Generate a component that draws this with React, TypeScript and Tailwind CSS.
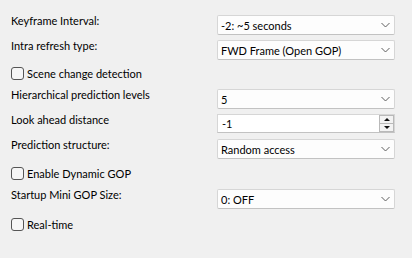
import React from "react";

const Chevron = () => (
  <svg width="9" height="5" viewBox="0 0 9 5" className="absolute right-[4px] top-1/2 -translate-y-1/2">
    <path d="M0.5 0.5 L4.5 4.5 L8.5 0.5" fill="none" stroke="#5f5f5f" strokeWidth="1" />
  </svg>
);

const Combo = ({ value }: { value: string }) => (
  <div className="relative w-[178px] h-[20px] bg-[#fdfdfd] border border-[#d6d6d6] border-b-[#c2c2c2] rounded-[2px] pl-[3px] leading-[19px] text-[#000]">
    {value}
    <Chevron />
  </div>
);

const Spin = ({ value }: { value: string }) => (
  <div className="relative w-[178px] h-[19px] bg-white border border-[#d6d6d6] border-b-[#c2c2c2] pl-[4px] leading-[18px]">
    {value}
    <div className="absolute right-0 top-0 bottom-0 w-[15px] flex flex-col">
      <div className="flex-1 flex items-center justify-center bg-[#f3f3f3] border border-[#b9b9b9]">
        <svg width="6" height="3" viewBox="0 0 6 3"><path d="M0 3 L3 0 L6 3 Z" fill="#111" /></svg>
      </div>
      <div className="flex-1 flex items-center justify-center bg-[#f3f3f3] border border-t-0 border-[#b9b9b9]">
        <svg width="6" height="3" viewBox="0 0 6 3"><path d="M0 0 L3 3 L6 0 Z" fill="#111" /></svg>
      </div>
    </div>
  </div>
);

const Row = ({ label, mt, children }: { label: string; mt: string; children: React.ReactNode }) => (
  <div className={`flex items-start ${mt}`}>
    <div className="w-[206px] -mt-[2px] leading-[16px]">{label}</div>
    {children}
  </div>
);

const Check = ({ label, mt }: { label: string; mt: string }) => (
  <div className={`flex items-center h-[13px] ${mt}`}>
    <div className="w-[13px] h-[13px] border border-[#555] rounded-[3px] bg-[#f6f6f6]" />
    <span className="ml-[3px] leading-[16px]">{label}</span>
  </div>
);

export default function App() {
  return (
    <div
      className="w-[412px] h-[258px] bg-[#f0f0f0] px-[11px] pt-[15px] text-[11px] text-[#000] flex flex-col"
      style={{ fontFamily: 'Lato, sans-serif' }}
    >
      <Row label="Keyframe Interval:" mt="mt-0">
        <Combo value="-2: ~5 seconds" />
      </Row>
      <Row label="Intra refresh type:" mt="mt-[5px]">
        <Combo value="FWD Frame (Open GOP)" />
      </Row>
      <Check label="Scene change detection" mt="mt-[7px]" />
      <Row label="Hierarchical prediction levels" mt="mt-[9px]">
        <Combo value="5" />
      </Row>
      <Row label="Look ahead distance" mt="mt-[5px]">
        <Spin value="-1" />
      </Row>
      <Row label="Prediction structure:" mt="mt-[6px]">
        <Combo value="Random access" />
      </Row>
      <Check label="Enable Dynamic GOP" mt="mt-[8px]" />
      <Row label="Startup Mini GOP Size:" mt="mt-[9px]">
        <Combo value="0: OFF" />
      </Row>
      <Check label="Real-time" mt="mt-[9px]" />
    </div>
  );
}
